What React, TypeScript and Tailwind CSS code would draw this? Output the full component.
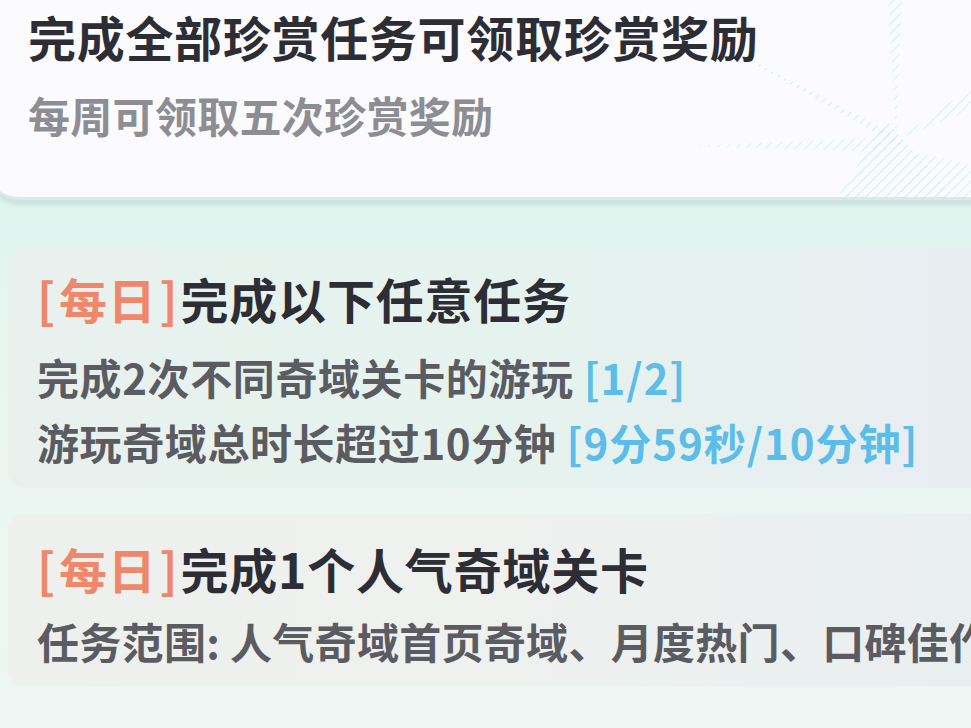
import React from 'react';

const font = "font-['Noto_Sans_CJK_SC','Noto_Sans',sans-serif]";

function Hatch() {
  // faint cyan burst of hatched rays in the top card corner
  return (
    <svg className="pointer-events-none absolute right-0 top-0" width="340" height="200" viewBox="0 0 340 200">
      <defs>
        <pattern id="hatch" width="7" height="7" patternUnits="userSpaceOnUse" patternTransform="rotate(45)">
          <line x1="0" y1="0" x2="0" y2="7" stroke="#bfeef0" strokeWidth="2.2" />
        </pattern>
      </defs>
      <polygon points="60,42 230,130 250,150" fill="url(#hatch)" opacity="0.8" />
      <polygon points="30,146 220,138 232,152" fill="url(#hatch)" opacity="0.6" />
      <polygon points="180,200 230,120 300,200" fill="url(#hatch)" opacity="0.8" />
      <polygon points="232,0 246,0 240,140" fill="url(#hatch)" opacity="0.7" />
      <polygon points="240,140 340,70 340,100" fill="url(#hatch)" opacity="0.7" />
      <polygon points="250,150 340,170 340,200 300,200" fill="url(#hatch)" opacity="0.6" />
    </svg>
  );
}

function Tag() {
  return (
    <span className="text-[#f0876a]">
      <span className="pr-[3px]">[</span>每日<span className="pl-[3px] pr-[2px]">]</span>
    </span>
  );
}

export default function App() {
  return (
    <div className={`relative h-[728px] w-[971px] overflow-hidden bg-gradient-to-b from-[#d0f4ed] via-[#e9f6f0] to-[#eef5f3] ${font}`}>
      {/* top summary card */}
      <div className="relative -ml-[14px] w-[1010px] h-[200px] rounded-bl-[34px] bg-[#fbfbfd] border-b-[3px] border-[#dfe6ee] shadow-[0_5px_4px_rgba(150,170,180,0.25)] pl-[42px] pt-[12px]">
        <Hatch />
        <div className="relative text-[48px] leading-[48px] tracking-[0.7px] font-bold text-[#2d2e35]">完成全部珍赏任务可领取珍赏奖励</div>
        <div className="relative mt-[34px] text-[42px] leading-[42px] tracking-[0.3px] font-bold text-[#8d8e93]">每周可领取五次珍赏奖励</div>
      </div>

      <div className="ml-[8px] mt-[48px] flex flex-col gap-[26px]">
        {/* task card 1 */}
        <div className="w-[1000px] rounded-[16px] bg-gradient-to-r from-[#e9f1ed] via-[#e5f3ee] to-[#e8ecf1] pl-[29px] pt-[26px] pb-[25px]">
          <div className="text-[48px] leading-[48px] tracking-[0.8px] font-bold text-[#2d2e35]">
            <Tag />完成以下任意任务
          </div>
          <div className="mt-[34px] text-[42px] leading-[42px] tracking-[0.6px] font-bold text-[#5b5c62]">
            完成2次不同奇域关卡的游玩 <span className="tracking-[1px] text-[#5cbde8]">[1/2]</span>
          </div>
          <div className="mt-[23px] text-[42px] leading-[42px] tracking-[0.6px] font-bold text-[#5b5c62]">
            游玩奇域总时长超过10分钟 <span className="tracking-[1px] text-[#5cbde8]">[9分59秒/10分钟]</span>
          </div>
        </div>

        {/* task card 2 */}
        <div className="w-[1000px] whitespace-nowrap rounded-[16px] bg-gradient-to-r from-[#eef0ee] via-[#eef1ee] to-[#e9eef0] pl-[29px] pt-[30px] pb-[24px]">
          <div className="text-[48px] leading-[48px] tracking-[0.8px] font-bold text-[#2d2e35]">
            <Tag />完成1个人气奇域关卡
          </div>
          <div className="mt-[28px] text-[42px] leading-[42px] tracking-[0.3px] font-bold text-[#5b5c62]">
            任务范围: 人气奇域首页奇域、月度热门、口碑佳作
          </div>
        </div>
      </div>
    </div>
  );
}
